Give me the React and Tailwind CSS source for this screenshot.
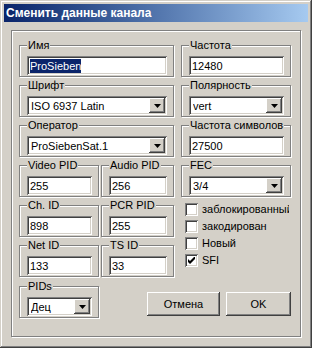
import React from 'react';

const sunken = 'bg-white shadow-[inset_1px_1px_0_#808080,inset_-1px_-1px_0_#ffffff,inset_2px_2px_0_#404040,inset_-2px_-2px_0_#d4d0c8]';
const raised = 'bg-[#d4d0c8] shadow-[inset_-1px_-1px_0_#404040,inset_1px_1px_0_#ffffff,inset_-2px_-2px_0_#808080,inset_2px_2px_0_#d4d0c8]';

const Group = ({ label, className = '', children }) => (
  <fieldset className={`border border-[#808080] shadow-[inset_1px_1px_0_#ffffff,1px_1px_0_#ffffff] pl-[7px] pr-[6px] pt-[5px] pb-[1px] min-w-0 ${className}`}>
    <legend className="px-px bg-[#d4d0c8] leading-[12px] whitespace-nowrap">{label}</legend>
    {children}
  </fieldset>
);

const Field = ({ value, selected }) => (
  <div className={`h-[19px] ${sunken} px-[3px] flex items-center`}>
    {selected ? (
      <span className="bg-[#0a246a] text-white leading-[14px]">{value}</span>
    ) : (
      <span className="leading-[14px]">{value}</span>
    )}
  </div>
);

const Select = ({ value }) => (
  <div className={`h-[19px] ${sunken} pl-[4px] pr-[2px] flex items-center`}>
    <span className="flex-1 leading-[14px] truncate">{value}</span>
    <div className={`w-[16px] h-[15px] ${raised} flex items-center justify-center`}>
      <svg width="7" height="4" viewBox="0 0 7 4">
        <path d="M0 0h7L3.5 4z" fill="#000" />
      </svg>
    </div>
  </div>
);

const Check = ({ label, checked }) => (
  <div className="flex items-center gap-[4px] h-[17px] whitespace-nowrap">
    <div className={`w-[13px] h-[13px] shrink-0 ${sunken} flex items-center justify-center`}>
      {checked && (
        <svg width="7" height="7" viewBox="0 0 7 7">
          <path d="M0 2v3l2 2 5-5V-1L2 4z" fill="#000" />
        </svg>
      )}
    </div>
    <span>{label}</span>
  </div>
);

const Button = ({ children, className = '' }) => (
  <div className={`h-[24px] ${raised} flex items-center justify-center ${className}`}>{children}</div>
);

export default function App() {
  return (
    <div className="w-[312px] h-[348px] bg-[#d4d0c8] font-['Liberation_Sans',Arial,sans-serif] text-[11px] text-black p-[4px] shadow-[inset_-1px_-1px_0_#404040,inset_1px_1px_0_#d4d0c8,inset_-2px_-2px_0_#808080,inset_2px_2px_0_#ffffff] flex flex-col">
      {/* title bar */}
      <div className="h-[18px] bg-gradient-to-r from-[#0a246a] to-[#a6caf0] flex items-center pl-[2px]">
        <span className="text-white font-bold text-[12px]">Сменить данные канала</span>
      </div>

      <div className="flex-1 px-[7px] pt-[8px] pb-[7px]">
        <div className="h-full border border-[#808080] shadow-[inset_1px_1px_0_#ffffff,1px_1px_0_#ffffff] pl-[7px] pt-[8px] flex flex-col gap-[2px]">
          <div className="flex gap-[7px]">
            <Group label="Имя" className="w-[155px]">
              <Field value="ProSieben" selected />
            </Group>
            <Group label="Частота" className="w-[110px]">
              <Field value="12480" />
            </Group>
          </div>

          <div className="flex gap-[7px]">
            <Group label="Шрифт" className="w-[155px]">
              <Select value="ISO 6937 Latin" />
            </Group>
            <Group label="Полярность" className="w-[110px]">
              <Select value="vert" />
            </Group>
          </div>

          <div className="flex gap-[7px]">
            <Group label="Оператор" className="w-[155px]">
              <Select value="ProSiebenSat.1" />
            </Group>
            <Group label="Частота символов" className="w-[110px]">
              <Field value="27500" />
            </Group>
          </div>

          <div className="flex gap-[7px]">
            <div className="w-[155px] flex gap-[2px]">
              <Group label="Video PID" className="w-[80px]">
                <Field value="255" />
              </Group>
              <Group label="Audio PID" className="flex-1">
                <Field value="256" />
              </Group>
            </div>
            <Group label="FEC" className="w-[110px]">
              <Select value="3/4" />
            </Group>
          </div>

          <div className="flex gap-[11px]">
            <div className="w-[155px] flex flex-col gap-[2px]">
              <div className="flex gap-[2px]">
                <Group label="Ch. ID" className="w-[80px]">
                  <Field value="898" />
                </Group>
                <Group label="PCR PID" className="flex-1">
                  <Field value="255" />
                </Group>
              </div>
              <div className="flex gap-[2px]">
                <Group label="Net ID" className="w-[80px]">
                  <Field value="133" />
                </Group>
                <Group label="TS ID" className="flex-1">
                  <Field value="33" />
                </Group>
              </div>
            </div>
            <div className="w-[104px] overflow-hidden pt-[2px]">
              <Check label="заблокированный" />
              <Check label="закодирован" />
              <Check label="Новый" />
              <Check label="SFI" checked />
            </div>
          </div>

          <div className="flex items-start mt-px">
            <Group label="PIDs" className="w-[80px]">
              <Select value="Дец" />
            </Group>
            <div className="flex gap-[6px] ml-[48px] mt-[12px]">
              <Button className="w-[73px]">Отмена</Button>
              <Button className="w-[65px]">OK</Button>
            </div>
          </div>
        </div>
      </div>
    </div>
  );
}
